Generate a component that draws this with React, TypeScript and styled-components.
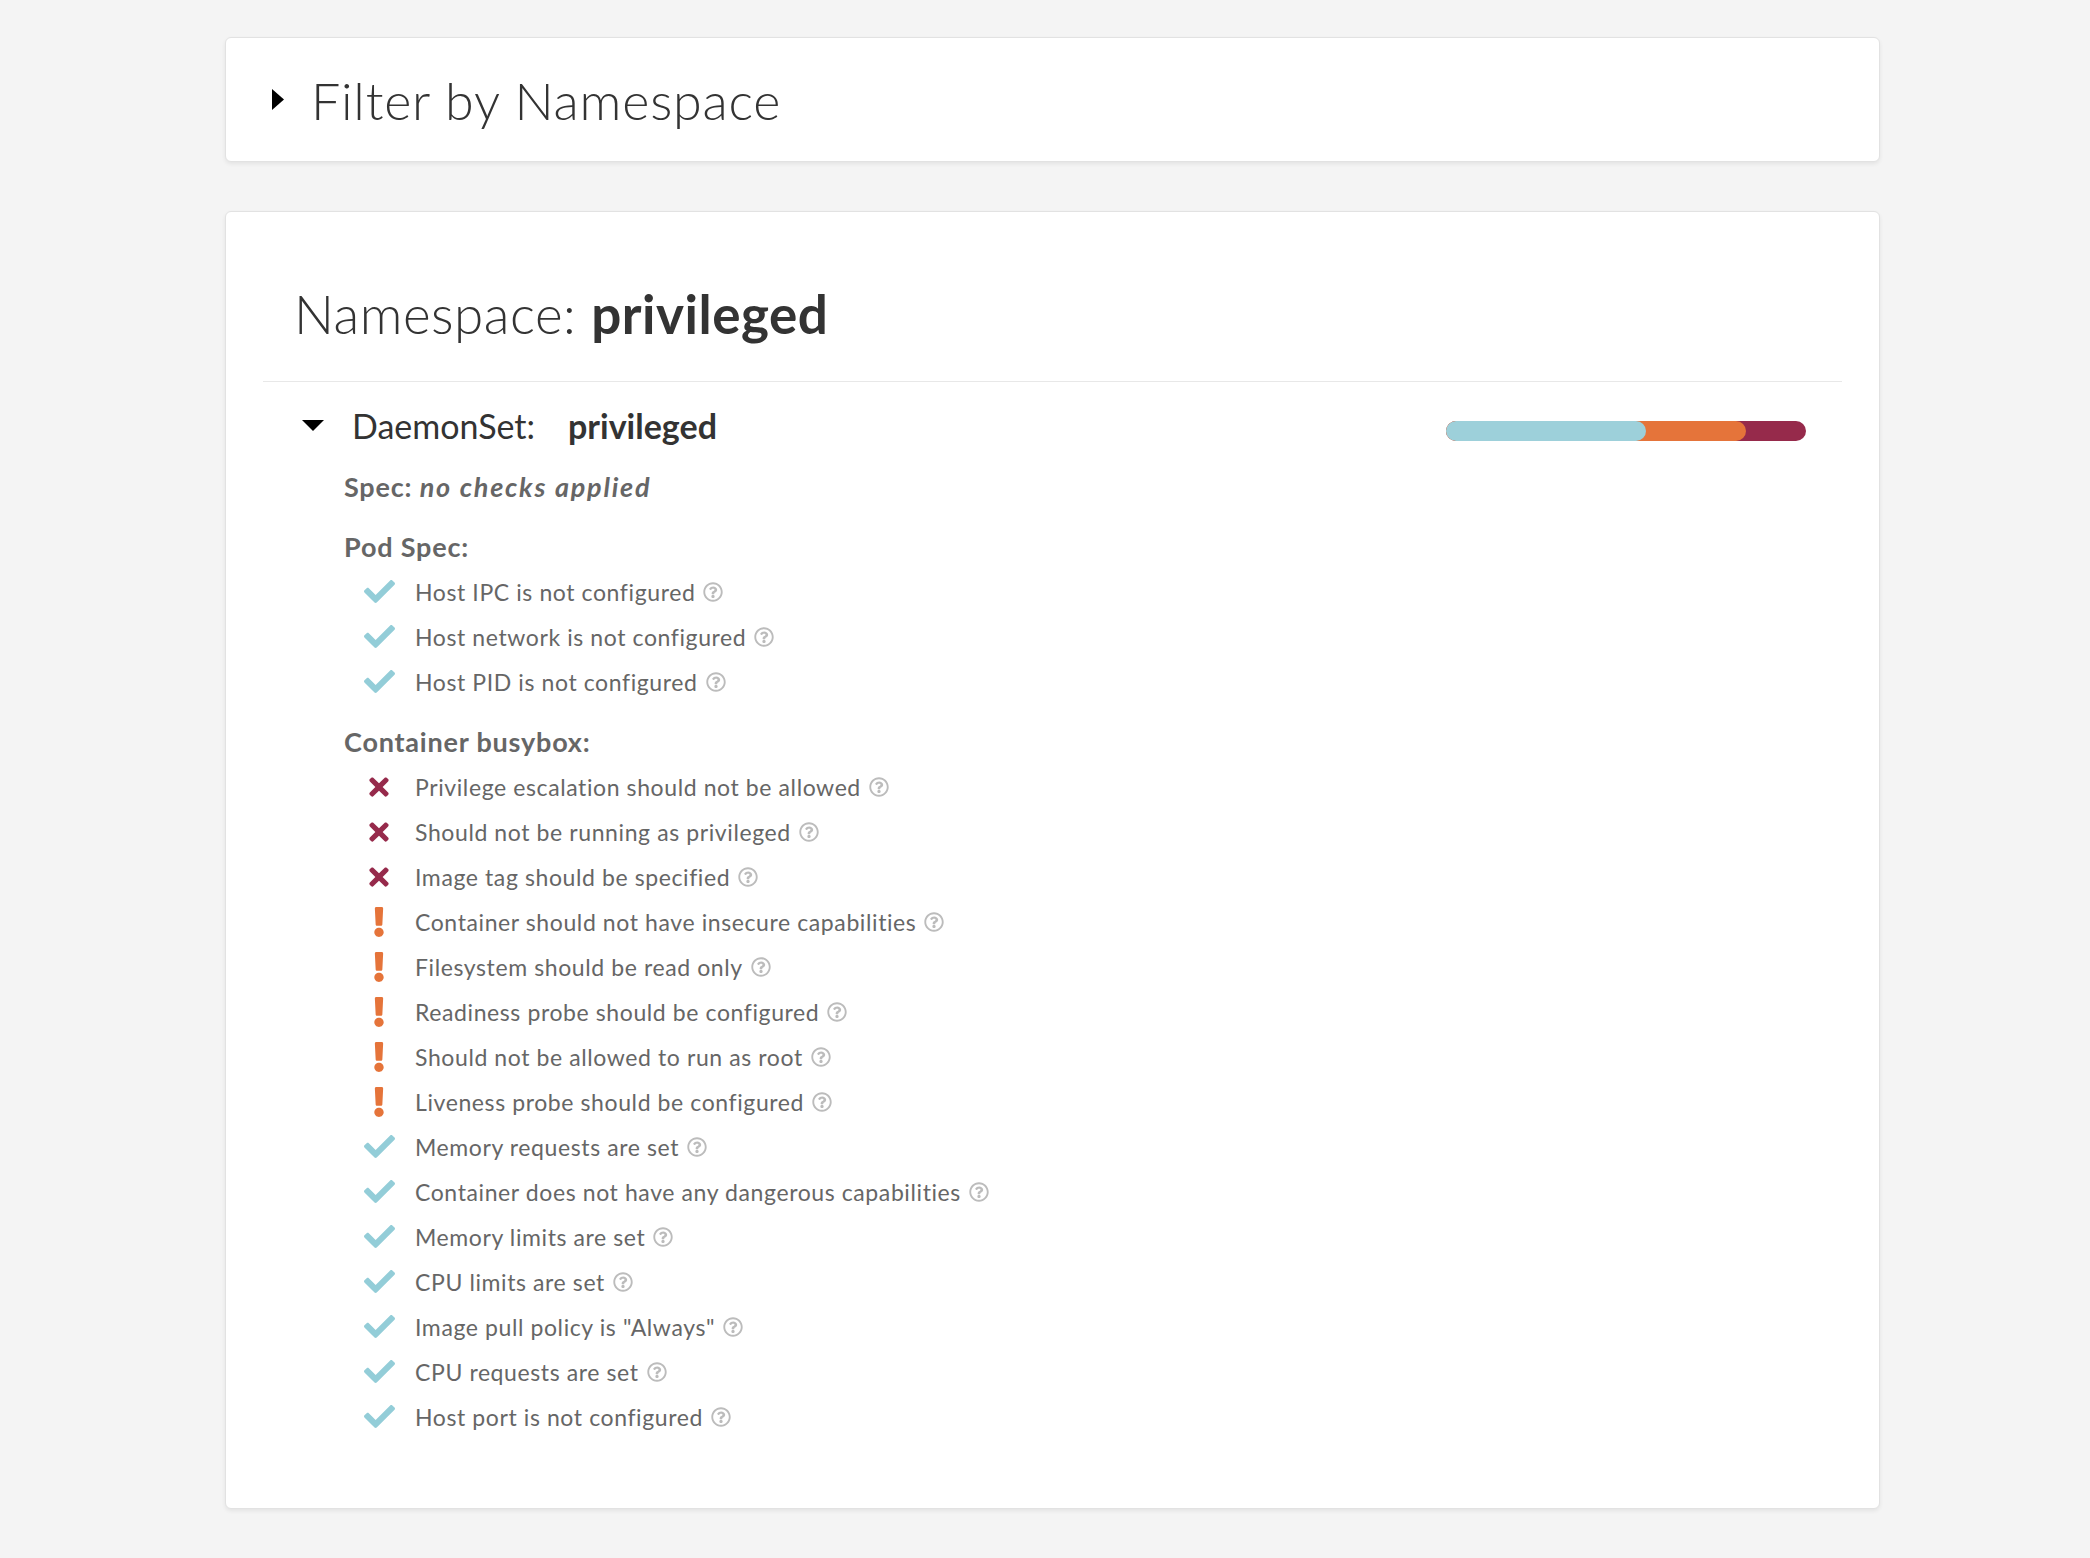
import React from 'react';
import styled, { createGlobalStyle } from 'styled-components';
import { FaCheck, FaTimes, FaExclamation, FaRegQuestionCircle } from 'react-icons/fa';

const GlobalStyle = createGlobalStyle`
  body {
    margin: 0;
    background: #f4f4f4;
    font-family: Lato, "Open Sans", sans-serif;
    color: #333;
  }
`;

const Page = styled.div`
  padding: 37px 0 48px 225px;
`;

const Card = styled.div`
  width: 1655px;
  box-sizing: border-box;
  background: #fff;
  border: 1px solid #e2e2e2;
  border-radius: 6px;
  box-shadow: 0 2px 4px rgba(0, 0, 0, 0.07);
`;

const FilterCard = styled(Card)`
  height: 125px;
  display: flex;
  align-items: center;
  gap: 27px;
  padding-left: 46px;
  margin-bottom: 49px;
  cursor: pointer;
`;

const FilterTitle = styled.div`
  font-size: 52px;
  font-weight: 300;
  letter-spacing: 0.8px;
  color: #333;
  line-height: 1;
`;

const ResultCard = styled(Card)`
  padding: 70px 37px 69px;
`;

const NamespaceHeader = styled.h2`
  margin: 0;
  padding: 0 0 35px 31px;
  border-bottom: 1px solid #e8e8e8;
  font-size: 53px;
  line-height: 64px;
  font-weight: 300;
  letter-spacing: 0.5px;
  color: #333;

  strong {
    font-weight: 700;
  }
`;

const Controller = styled.div`
  padding: 21px 36px 0 39px;
`;

const ControllerRow = styled.div`
  display: flex;
  align-items: center;
  height: 56px;
  cursor: pointer;
`;

const ControllerName = styled.div`
  flex: 1;
  display: flex;
  align-items: center;
  padding-bottom: 12px;
  font-size: 34px;
  color: #333;

  span {
    margin-left: 28px;
  }

  strong {
    margin-left: 33px;
    font-weight: 700;
  }
`;

const Bar = styled.div`
  width: 360px;
  height: 20px;
  border-radius: 10px;
  background: #962a4b;
  display: flex;
`;

const BarSegment = styled.div<{ $color: string }>`
  height: 100%;
  border-radius: 10px;
  background: ${p => p.$color};
  display: flex;
`;

const Details = styled.div`
  padding: 6px 0 0 42px;
`;

const Section = styled.div`
  & + & {
    margin-top: 16px;
  }
`;

const SectionTitle = styled.div`
  font-size: 27px;
  line-height: 44px;
  font-weight: 700;
  letter-spacing: 0.8px;
  color: #666;

  em {
    font-style: italic;
    letter-spacing: 1.8px;
  }
`;

const CheckList = styled.ul`
  list-style: none;
  margin: 0;
  padding: 0 0 0 19px;
`;

const CheckItem = styled.li`
  display: flex;
  align-items: center;
  height: 45px;
  font-size: 23px;
  letter-spacing: 0.6px;
  color: #666;
`;

const IconBox = styled.span<{ $color: string }>`
  width: 32px;
  margin-right: 20px;
  display: flex;
  justify-content: center;
  align-items: center;
  color: ${p => p.$color};
`;

const Help = styled.span`
  display: inline-flex;
  margin-left: 8px;
  color: #bcbcbc;
`;

type Level = 'pass' | 'warning' | 'danger';

const colors: Record<Level, string> = {
  pass: '#93cdd8',
  warning: '#e5743a',
  danger: '#962a4b',
};

const StatusIcon: React.FC<{ level: Level }> = ({ level }) => {
  if (level === 'pass') return <FaCheck size={31} />;
  if (level === 'danger') return <FaTimes size={28} />;
  return <FaExclamation size={30} />;
};

const Check: React.FC<{ level: Level; text: string }> = ({ level, text }) => (
  <CheckItem>
    <IconBox $color={colors[level]}>
      <StatusIcon level={level} />
    </IconBox>
    {text}
    <Help>
      <FaRegQuestionCircle size={20} />
    </Help>
  </CheckItem>
);

const podChecks: [Level, string][] = [
  ['pass', 'Host IPC is not configured'],
  ['pass', 'Host network is not configured'],
  ['pass', 'Host PID is not configured'],
];

const containerChecks: [Level, string][] = [
  ['danger', 'Privilege escalation should not be allowed'],
  ['danger', 'Should not be running as privileged'],
  ['danger', 'Image tag should be specified'],
  ['warning', 'Container should not have insecure capabilities'],
  ['warning', 'Filesystem should be read only'],
  ['warning', 'Readiness probe should be configured'],
  ['warning', 'Should not be allowed to run as root'],
  ['warning', 'Liveness probe should be configured'],
  ['pass', 'Memory requests are set'],
  ['pass', 'Container does not have any dangerous capabilities'],
  ['pass', 'Memory limits are set'],
  ['pass', 'CPU limits are set'],
  ['pass', 'Image pull policy is "Always"'],
  ['pass', 'CPU requests are set'],
  ['pass', 'Host port is not configured'],
];

const App: React.FC = () => {
  const all = [...podChecks, ...containerChecks];
  const pass = all.filter(c => c[0] === 'pass').length;
  const warn = all.filter(c => c[0] === 'warning').length;
  const orangeShare = ((pass + warn) / all.length) * 100;
  const blueShare = (pass / (pass + warn)) * 100;

  return (
    <>
      <GlobalStyle />
      <Page>
        <FilterCard>
          <svg width="12" height="21" viewBox="0 0 12 21">
            <polygon points="0,0 12,10.5 0,21" fill="#000" />
          </svg>
          <FilterTitle>Filter by Namespace</FilterTitle>
        </FilterCard>

        <ResultCard>
          <NamespaceHeader>
            Namespace: <strong>privileged</strong>
          </NamespaceHeader>
          <Controller>
            <ControllerRow>
              <ControllerName>
                <svg width="22" height="11" viewBox="0 0 22 11">
                  <polygon points="0,0 22,0 11,11" fill="#000" />
                </svg>
                <span>DaemonSet:</span>
                <strong>privileged</strong>
              </ControllerName>
              <Bar>
                <BarSegment $color={colors.warning} style={{ width: `${orangeShare}%` }}>
                  <BarSegment $color="#9dd0da" style={{ width: `${blueShare}%` }} />
                </BarSegment>
              </Bar>
            </ControllerRow>
            <Details>
              <Section>
                <SectionTitle>
                  Spec: <em>no checks applied</em>
                </SectionTitle>
              </Section>
              <Section>
                <SectionTitle>Pod Spec:</SectionTitle>
                <CheckList>
                  {podChecks.map(([level, text]) => (
                    <Check key={text} level={level} text={text} />
                  ))}
                </CheckList>
              </Section>
              <Section>
                <SectionTitle>Container busybox:</SectionTitle>
                <CheckList>
                  {containerChecks.map(([level, text]) => (
                    <Check key={text} level={level} text={text} />
                  ))}
                </CheckList>
              </Section>
            </Details>
          </Controller>
        </ResultCard>
      </Page>
    </>
  );
};

export default App;
